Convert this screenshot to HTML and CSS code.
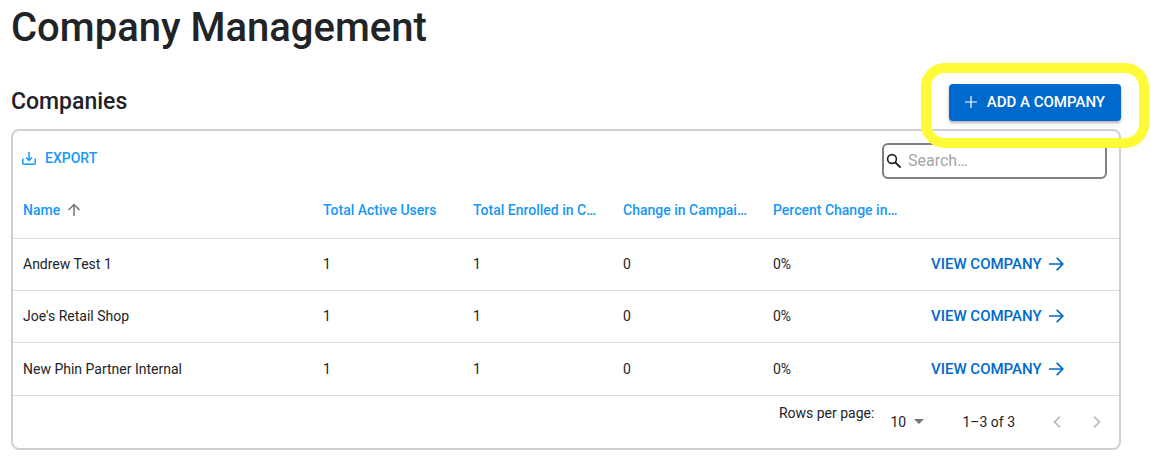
FILE: index.html
```html
<!DOCTYPE html>
<html lang="en">
<head>
  <meta charset="UTF-8">
  <meta name="viewport" content="width=device-width, initial-scale=1.0">
  <title>Company Management</title>
  <link rel="stylesheet" href="styles.css">
</head>
<body>

  <main class="page">
    <h1>Company Management</h1>

    <div class="section-header">
      <h2>Companies</h2>
      <div class="highlight">
        <button type="button" class="add-button">
          <svg class="icon-large" viewBox="0 0 20 20" aria-hidden="true"><path d="M10 4v12M4 10h12" stroke-width="1.2" /></svg>
          ADD A COMPANY
        </button>
      </div>
    </div>

    <section class="card">
      <div class="toolbar">
        <button type="button" class="export-button">
          <svg class="icon" viewBox="0 0 16 16" aria-hidden="true"><path d="M1.8 8.5v4.7q0 1 1 1h10.4q1 0 1-1V8.5M8 2v8.5M5 7.5l3 3 3-3" stroke-width="1.5" /></svg>
          EXPORT
        </button>
        <label class="search">
          <svg class="icon" viewBox="0 0 16 16" aria-hidden="true"><circle cx="6" cy="6" r="4.4" stroke-width="1.6" /><path d="M9.2 9.2l5.4 5.4" stroke-width="2" /></svg>
          <input type="search" placeholder="Search…" aria-label="Search companies">
        </label>
      </div>

      <table>
        <colgroup>
          <col class="col-name">
          <col class="col-number">
          <col class="col-number">
          <col class="col-number">
          <col class="col-number">
          <col>
        </colgroup>
        <thead>
          <tr>
            <th scope="col" aria-sort="ascending">
              <div class="sorted">
                Name
                <svg class="icon" viewBox="0 0 16 16" aria-hidden="true"><path d="M8 14V2.7M2.5 8L8 2.5 13.5 8" stroke-width="1.5" /></svg>
              </div>
            </th>
            <th scope="col">Total Active Users</th>
            <th scope="col">Total Enrolled in Campaigns</th>
            <th scope="col">Change in Campaigns</th>
            <th scope="col">Percent Change in Campaigns</th>
            <td></td>
          </tr>
        </thead>
        <tbody>
          <tr>
            <td>Andrew Test 1</td>
            <td>1</td>
            <td>1</td>
            <td>0</td>
            <td>0%</td>
            <td>
              <a class="view-link" href="#">VIEW COMPANY
                <svg class="icon" viewBox="0 0 16 16" aria-hidden="true"><path d="M1 8h13.5M8.7 1.8L14.8 8l-6.1 6.2" stroke-width="1.7" /></svg>
              </a>
            </td>
          </tr>
          <tr>
            <td>Joe's Retail Shop</td>
            <td>1</td>
            <td>1</td>
            <td>0</td>
            <td>0%</td>
            <td>
              <a class="view-link" href="#">VIEW COMPANY
                <svg class="icon" viewBox="0 0 16 16" aria-hidden="true"><path d="M1 8h13.5M8.7 1.8L14.8 8l-6.1 6.2" stroke-width="1.7" /></svg>
              </a>
            </td>
          </tr>
          <tr>
            <td>New Phin Partner Internal</td>
            <td>1</td>
            <td>1</td>
            <td>0</td>
            <td>0%</td>
            <td>
              <a class="view-link" href="#">VIEW COMPANY
                <svg class="icon" viewBox="0 0 16 16" aria-hidden="true"><path d="M1 8h13.5M8.7 1.8L14.8 8l-6.1 6.2" stroke-width="1.7" /></svg>
              </a>
            </td>
          </tr>
        </tbody>
      </table>

      <div class="pagination">
        <label class="rows-label" for="rows">Rows per page:</label>
        <div class="select-wrap">
          <select id="rows">
            <option>10</option>
            <option>25</option>
            <option>50</option>
          </select>
          <svg class="caret" viewBox="0 0 10 5" aria-hidden="true"><path d="M0 0h10L5 5z" /></svg>
        </div>
        <span class="range">1–3 of 3</span>
        <button type="button" class="page-button" disabled aria-label="Previous page">
          <svg class="icon" viewBox="0 0 16 16" aria-hidden="true"><path d="M11 2.7L5.5 8l5.5 5.3" stroke-width="1.8" /></svg>
        </button>
        <button type="button" class="page-button" disabled aria-label="Next page">
          <svg class="icon" viewBox="0 0 16 16" aria-hidden="true"><path d="M5 2.7L10.5 8 5 13.3" stroke-width="1.8" /></svg>
        </button>
      </div>
    </section>
  </main>

</body>
</html>
```

FILE: styles.css
```css
* {
  box-sizing: border-box;
}

body {
  margin: 0;
  background-color: #fff;
  color: #212327;
  font-family: Roboto, sans-serif;
  font-size: 14px;
  line-height: 20px;
}

.page {
  padding: 4px 30px 16px 11px;
}

h1 {
  margin: 0 0 32px;
  font-size: 40px;
  font-weight: 500;
  line-height: 48px;
}

h2 {
  margin: 0;
  font-size: 23px;
  font-weight: 500;
  line-height: 36px;
}

button,
input,
select {
  font: inherit;
}

button {
  display: flex;
  align-items: center;
  border: none;
  font-weight: 500;
  cursor: pointer;
}

svg {
  flex: none;
  fill: none;
  stroke: currentColor;
}

.icon {
  width: 16px;
  height: 16px;
}

.icon-large {
  width: 20px;
  height: 20px;
}

.section-header {
  display: flex;
  align-items: flex-start;
  justify-content: space-between;
  margin-bottom: 8px;
}

.highlight {
  position: relative;
}

/* ring drawn over the card below */
.highlight::after {
  content: "";
  position: absolute;
  inset: -21px -28px -27px;
  border: 10px solid #fffa37;
  border-radius: 24px;
  pointer-events: none;
}

.add-button {
  gap: 6px;
  padding: 8px 16px 9px 12px;
  border-radius: 4px;
  background-color: #006acc;
  color: #fff;
  font-size: 15px;
  box-shadow: 0 2px 3px rgba(0, 0, 0, 0.3);
}

.card {
  border: 2px solid #d0d0d0;
  border-radius: 8px;
}

.toolbar {
  display: flex;
  align-items: flex-start;
  justify-content: space-between;
  padding: 12px 12px 4px 8px;
}

.export-button {
  gap: 8px;
  padding: 5px 0;
  background: none;
  color: #1698f8;
}

.search {
  display: flex;
  align-items: center;
  gap: 6px;
  width: 225px;
  height: 36px;
  padding: 0 2px;
  border: 2px solid #808080;
  border-radius: 6px;
}

.search input {
  flex: 1;
  min-width: 0;
  padding: 0;
  border: none;
  outline: none;
  background: none;
  font-size: 16px;
}

.search input::placeholder {
  color: #a6a6a6;
}

table {
  width: 100%;
  border-collapse: collapse;
  table-layout: fixed;
}

.col-name {
  width: 300px;
}

.col-number {
  width: 150px;
}

tr {
  height: 52px;
  border-bottom: 1px solid #dcdcdc;
}

thead tr {
  height: 55px;
}

tbody tr:last-child {
  height: 53px;
}

th,
td {
  padding: 0 10px;
  overflow: hidden;
  text-align: left;
  text-overflow: ellipsis;
  white-space: nowrap;
}

th {
  padding-right: 14px;
  color: #1698f8;
  font-weight: 500;
}

.sorted {
  display: flex;
  align-items: center;
  gap: 6px;
}

.sorted svg {
  color: #757575;
}

.view-link {
  display: inline-flex;
  align-items: center;
  gap: 6px;
  padding: 0 8px;
  color: #006acc;
  font-size: 15px;
  font-weight: 500;
  text-decoration: none;
}

.pagination {
  display: flex;
  align-items: center;
  justify-content: flex-end;
  height: 52px;
  padding-right: 2px;
}

.rows-label {
  align-self: flex-start;
  padding-top: 7px;
  margin-right: 16px;
}

.select-wrap {
  display: flex;
  align-items: center;
  margin-right: 38px;
}

select {
  width: 34px;
  margin-right: -10px;
  padding: 0;
  border: none;
  appearance: none;
  background: none;
  color: inherit;
}

.caret {
  width: 10px;
  height: 5px;
  fill: #757575;
  stroke: none;
  pointer-events: none;
}

.range {
  margin-right: 22px;
}

.page-button {
  padding: 12px;
  background: none;
  color: #bdbdbd;
}
```
